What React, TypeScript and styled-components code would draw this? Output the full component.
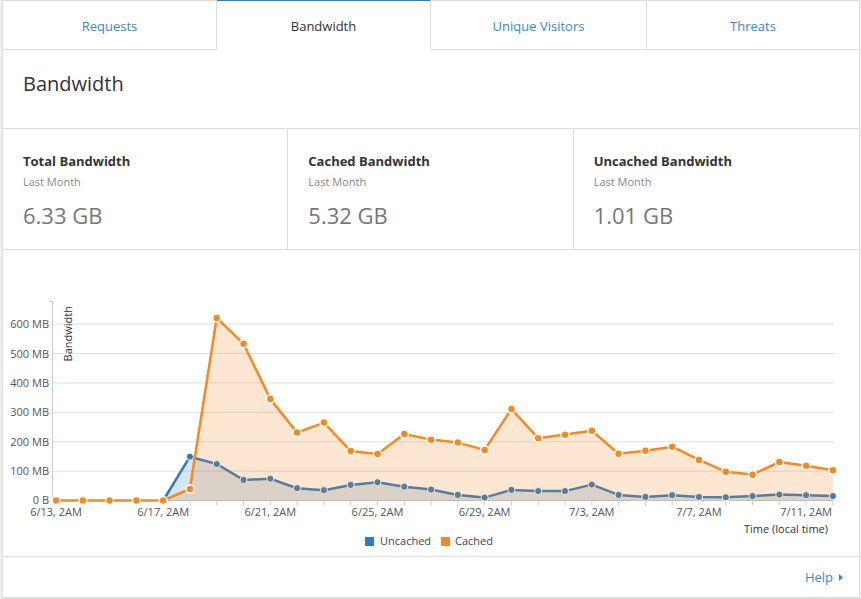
import React from "react";
import styled, { createGlobalStyle } from "styled-components";

const GlobalStyle = createGlobalStyle`
  html, body { margin: 0; padding: 0; }
  body {
    background: #efefef;
    font-family: "Open Sans", "Noto Sans", sans-serif;
    color: #333;
  }
`;

const Panel = styled.div`
  box-sizing: border-box;
  width: 858px;
  margin-left: 2px;
  background: #fff;
  border: 1px solid #ddd;
  border-top: none;
`;

const TabBar = styled.div`
  display: grid;
  grid-template-columns: 214px 214px 216px 1fr;
`;

const Tab = styled.div<{ $active?: boolean }>`
  box-sizing: border-box;
  height: 50px;
  text-align: center;
  font-size: 13px;
  line-height: 18px;
  padding-top: 16px;
  color: ${(p) => (p.$active ? "#333" : "#3a87c8")};
  border-top: ${(p) => (p.$active ? "2px solid #2f7bbf" : "1px solid #ddd")};
  border-bottom: ${(p) => (p.$active ? "1px solid transparent" : "1px solid #ddd")};
  border-right: 1px solid #ddd;
  &:last-child { border-right: none; }
  ${(p) => (p.$active ? "margin-top: -1px; height: 51px;" : "")}
`;

const Header = styled.div`
  padding: 20px 22px 30px 20px;
  border-bottom: 1px solid #ddd;
  font-size: 20px;
  line-height: 28px;
  color: #333;
`;

const Stats = styled.div`
  display: grid;
  grid-template-columns: repeat(3, 1fr);
  border-bottom: 1px solid #ddd;
`;

const Stat = styled.div`
  padding: 23px 20px 19px 20px;
  border-right: 1px solid #ddd;
  &:last-child { border-right: none; }
`;

const StatTitle = styled.div`
  font-size: 13px;
  font-weight: 700;
  line-height: 18px;
  color: #333;
`;

const StatSub = styled.div`
  margin-top: 4px;
  font-size: 11px;
  line-height: 16px;
  color: #888;
`;

const StatValue = styled.div`
  margin-top: 10px;
  font-size: 22px;
  line-height: 30px;
  color: #777;
`;

const ChartArea = styled.div`
  height: 306px;
  border-bottom: 1px solid #ddd;
  svg { display: block; }
`;

const Footer = styled.div`
  height: 40px;
  display: flex;
  align-items: center;
  justify-content: flex-end;
  padding-right: 16px;
  border-bottom: 1px solid #ddd;
`;

const HelpLink = styled.a`
  font-size: 13px;
  color: #3a87c8;
  text-decoration: none;
  display: flex;
  align-items: center;
  gap: 6px;
`;

const cached = [0, 0, 0, 0, 0, 39, 621, 533, 345, 231, 265, 168, 158, 226, 207, 197, 172, 311, 212, 224, 237, 159, 169, 183, 138, 98, 88, 131, 118, 103];
const uncached = [0, 0, 0, 0, 0, 149, 124, 70, 74, 42, 35, 53, 62, 47, 37, 19, 10, 36, 32, 32, 54, 19, 12, 18, 12, 11, 15, 20, 18, 15];

const X0 = 56;
const DX = 26.79;
const Y0 = 500.5;
const K = 0.294;
const xOf = (i: number) => X0 + i * DX;
const yOf = (v: number) => Y0 - v * K;

const ORANGE = "#f6891f";
const BLUE = "#2f7bbf";
const labels = ["6/13, 2AM", "6/17, 2AM", "6/21, 2AM", "6/25, 2AM", "6/29, 2AM", "7/3, 2AM", "7/7, 2AM", "7/11, 2AM"];

function linePath(d: number[], from = 0) {
  return d
    .map((v, i) => (i < from ? null : `${i === from ? "M" : "L"}${xOf(i).toFixed(1)},${yOf(v).toFixed(1)}`))
    .filter(Boolean)
    .join(" ");
}
function areaPath(d: number[], from = 0) {
  return `${linePath(d, from)} L${xOf(d.length - 1)},${Y0} L${xOf(from)},${Y0} Z`;
}

const Chart: React.FC = () => {
  const fontProps = { fontFamily: "'Open Sans', sans-serif", fontSize: 11, fill: "#555" };
  return (
    <svg width={856} height={306} viewBox="3 250 856 306">
      {[1, 2, 3, 4, 5, 6].map((k) => (
        <line key={k} x1={52} x2={834} y1={Y0 - k * 29.4} y2={Y0 - k * 29.4} stroke="#e0e0e0" strokeWidth={1} />
      ))}
      <line x1={52.5} x2={52.5} y1={301} y2={Y0} stroke="#ccc" strokeWidth={1} />
      <line x1={49} x2={52.5} y1={301.5} y2={301.5} stroke="#ccc" strokeWidth={1} />
      <line x1={52} x2={834} y1={Y0} y2={Y0} stroke="#ccc" strokeWidth={1} />
      {cached.map((_, i) => (
        <line key={i} x1={xOf(i)} x2={xOf(i)} y1={Y0} y2={Y0 + 5} stroke="#ccc" strokeWidth={1} />
      ))}
      {["0 B", "100 MB", "200 MB", "300 MB", "400 MB", "500 MB", "600 MB"].map((t, k) => (
        <text key={t} x={49} y={Y0 - k * 29.4 + (k === 0 ? 3 : 4)} textAnchor="end" {...fontProps}>{t}</text>
      ))}
      {labels.map((t, j) => (
        <text key={t} x={xOf(j * 4)} y={516} textAnchor="middle" {...fontProps}>{t}</text>
      ))}
      <text transform="translate(72,306) rotate(-90)" textAnchor="end" {...fontProps} fill="#333">Bandwidth</text>
      <text x={828} y={533} textAnchor="end" {...fontProps} fill="#333">Time (local time)</text>

      <path d={areaPath(uncached, 4)} fill={BLUE} fillOpacity={0.2} />
      <path d={linePath(uncached, 4)} fill="none" stroke={BLUE} strokeWidth={2.5} strokeLinejoin="round" />
      {uncached.map((v, i) => (i < 5 ? null : <circle key={i} cx={xOf(i)} cy={yOf(v)} r={3.6} fill={BLUE} stroke="#fff" strokeWidth={1} />))}

      <path d={areaPath(cached)} fill={ORANGE} fillOpacity={0.2} />
      <path d={linePath(cached)} fill="none" stroke={ORANGE} strokeWidth={2.5} strokeLinejoin="round" />
      {cached.map((v, i) => (
        <circle key={i} cx={xOf(i)} cy={yOf(v)} r={4} fill={ORANGE} stroke="#fff" strokeWidth={1.5} />
      ))}

      <rect x={365} y={537} width={9} height={9} fill={BLUE} />
      <text x={380} y={545} {...fontProps} fill="#444">Uncached</text>
      <rect x={441} y={537} width={9} height={9} fill={ORANGE} />
      <text x={455} y={545} {...fontProps} fill="#444">Cached</text>
    </svg>
  );
};

const stats = [
  { title: "Total Bandwidth", value: "6.33 GB" },
  { title: "Cached Bandwidth", value: "5.32 GB" },
  { title: "Uncached Bandwidth", value: "1.01 GB" },
];

export default function App() {
  return (
    <>
      <GlobalStyle />
      <Panel>
        <TabBar>
          <Tab>Requests</Tab>
          <Tab $active>Bandwidth</Tab>
          <Tab>Unique Visitors</Tab>
          <Tab>Threats</Tab>
        </TabBar>
        <Header>Bandwidth</Header>
        <Stats>
          {stats.map((s) => (
            <Stat key={s.title}>
              <StatTitle>{s.title}</StatTitle>
              <StatSub>Last Month</StatSub>
              <StatValue>{s.value}</StatValue>
            </Stat>
          ))}
        </Stats>
        <ChartArea>
          <Chart />
        </ChartArea>
        <Footer>
          <HelpLink href="#">
            Help
            <svg width="4" height="7" viewBox="0 0 4 7"><path d="M0 0 L4 3.5 L0 7 Z" fill="#3a87c8" /></svg>
          </HelpLink>
        </Footer>
      </Panel>
    </>
  );
}
